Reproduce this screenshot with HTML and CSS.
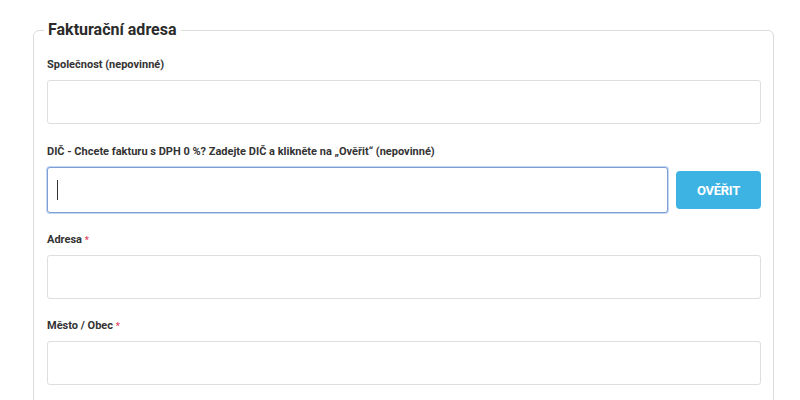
FILE: index.html
```html
<!DOCTYPE html>
<html lang="cs">
<head>
<meta charset="utf-8">
<title>Fakturační adresa</title>
<link rel="stylesheet" href="styles.css">
</head>
<body>
<div class="page">
  <fieldset class="box">
    <legend class="box-title">Fakturační adresa</legend>
    <div class="group group-first">
      <label class="label">Společnost (nepovinné)</label>
      <input class="field" type="text">
    </div>
    <div class="group">
      <label class="label">DIČ - Chcete fakturu s DPH 0 %? Zadejte DIČ a klikněte na „Ověřit“ (nepovinné)</label>
      <div class="row">
        <div class="field-wrap">
          <input class="field field-focus" type="text">
          <span class="caret"></span>
        </div>
        <button class="btn" type="button">OVĚŘIT</button>
      </div>
    </div>
    <div class="group">
      <label class="label">Adresa <span class="req">*</span></label>
      <input class="field" type="text">
    </div>
    <div class="group">
      <label class="label">Město / Obec <span class="req">*</span></label>
      <input class="field" type="text">
    </div>
  </fieldset>
</div>
</body>
</html>
```

FILE: styles.css
```css
html, body {
  margin: 0;
  padding: 0;
  background: #fff;
}
body {
  font-family: Roboto, "Liberation Sans", Arial, sans-serif;
  color: #333;
}
.page {
  padding: 20px 0 0 33px;
}
.box {
  width: 714px;
  margin: 0;
  border: 1px solid #dcdcdc;
  border-radius: 6px;
  padding: 17px 12px 0 13px;
}
.box-title {
  font-size: 16px;
  line-height: 20px;
  font-weight: 700;
  color: #2b2b2b;
  padding: 0 4px;
  margin-left: -3px;
}
.group {
  margin-bottom: 19px;
}
.group-first {
  margin-bottom: 20px;
}
.label {
  display: block;
  font-size: 11px;
  line-height: 16px;
  font-weight: 700;
  color: #333;
  margin-bottom: 7px;
}
.req {
  color: #e0405a;
  font-size: 9px;
}
.field {
  display: block;
  box-sizing: border-box;
  width: 100%;
  height: 44px;
  margin: 0;
  border: 1px solid #dedede;
  border-radius: 3px;
  background: #fff;
  outline: none;
}
.row {
  display: flex;
  align-items: center;
  gap: 8px;
}
.field-wrap {
  position: relative;
  flex: 1;
}
.field-focus {
  height: 46px;
  border: 1px solid #7c9fd6;
  box-shadow: 0 0 0 1px #c5d7f2;
}
.caret {
  position: absolute;
  left: 10px;
  top: 13px;
  width: 1px;
  height: 20px;
  background: #333;
}
.btn {
  width: 85px;
  height: 38px;
  border: 0;
  border-radius: 4px;
  background: #3db3e4;
  color: #fff;
  font-family: Roboto, "Liberation Sans", Arial, sans-serif;
  font-size: 13px;
  font-weight: 700;
  letter-spacing: -0.3px;
  cursor: pointer;
}
```
